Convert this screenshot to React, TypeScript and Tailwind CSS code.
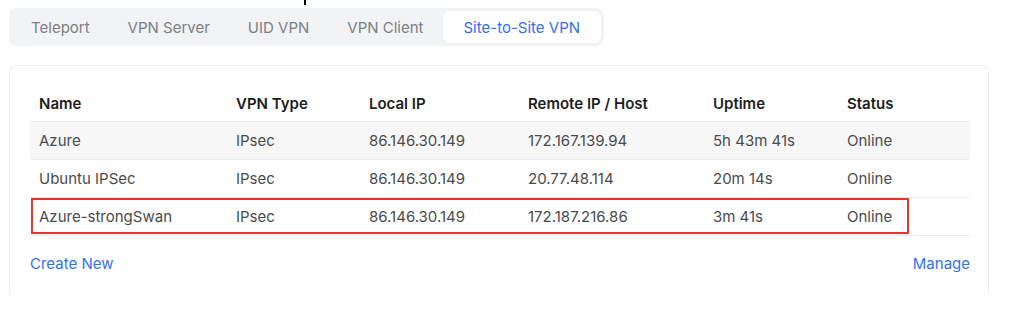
import React from "react";

const tabs = ["Teleport", "VPN Server", "UID VPN", "VPN Client", "Site-to-Site VPN"];

const cols = [
  { label: "Name", w: "w-[197px]" },
  { label: "VPN Type", w: "w-[133px]" },
  { label: "Local IP", w: "w-[159px]" },
  { label: "Remote IP / Host", w: "w-[185px]" },
  { label: "Uptime", w: "w-[134px]" },
  { label: "Status", w: "flex-1" },
];

const rows = [
  ["Azure", "IPsec", "86.146.30.149", "172.167.139.94", "5h 43m 41s", "Online"],
  ["Ubuntu IPSec", "IPsec", "86.146.30.149", "20.77.48.114", "20m 14s", "Online"],
  ["Azure-strongSwan", "IPsec", "86.146.30.149", "172.187.216.86", "3m 41s", "Online"],
];

export default function App() {
  return (
    <div
      className="relative w-[1024px] h-[320px] bg-white overflow-hidden"
      style={{ fontFamily: "Inter, 'Noto Sans', sans-serif" }}
    >
      <div className="absolute left-[304px] top-0 w-[2px] h-[5px] bg-black" />
      <div className="pt-[8px] pl-[9px]">
        <div className="inline-flex h-[38px] items-center rounded-[8px] bg-[#f2f3f5] px-[3px]">
          {tabs.map((t, i) =>
            i === tabs.length - 1 ? (
              <div
                key={t}
                className="flex h-[32px] items-center rounded-[7px] bg-white px-[21px] pt-[2px] text-[15px] text-[#2f6ff0]"
              >
                {t}
              </div>
            ) : (
              <div
                key={t}
                className="flex h-[32px] items-center px-[19px] pt-[2px] text-[15px] text-[#7b7f86]"
              >
                {t}
              </div>
            )
          )}
        </div>
      </div>
      <div className="ml-[9px] mt-[19px] w-[980px] rounded-t-[8px] border border-b-0 border-[#efefef] pl-[20px] pr-[18px] pt-[19px]">
        <div className="relative">
          <div className="flex h-[37px] items-center border-b border-[#ececec] pt-[2px]">
            {cols.map((c) => (
              <div key={c.label} className={`${c.w} pl-[9px] text-[15px] font-semibold text-[#1d1d1f]`}>
                {c.label}
              </div>
            ))}
          </div>
          {rows.map((r, ri) => (
            <div
              key={ri}
              className={`flex h-[38px] items-center border-b border-[#ececec] pt-[2px] ${ri === 0 ? "bg-[#f7f7f8]" : ""}`}
            >
              {r.map((v, ci) => (
                <div key={ci} className={`${cols[ci].w} pl-[9px] text-[15px] text-[#4a4b4d]`}>
                  {v}
                </div>
              ))}
            </div>
          ))}
          <div className="absolute left-[1px] top-[113px] h-[36px] w-[878px] border-2 border-[#e8322a]" />
        </div>
        <div className="flex h-[57px] items-center justify-between text-[15px] text-[#3370ee]">
          <span>Create New</span>
          <span>Manage</span>
        </div>
      </div>
    </div>
  );
}
